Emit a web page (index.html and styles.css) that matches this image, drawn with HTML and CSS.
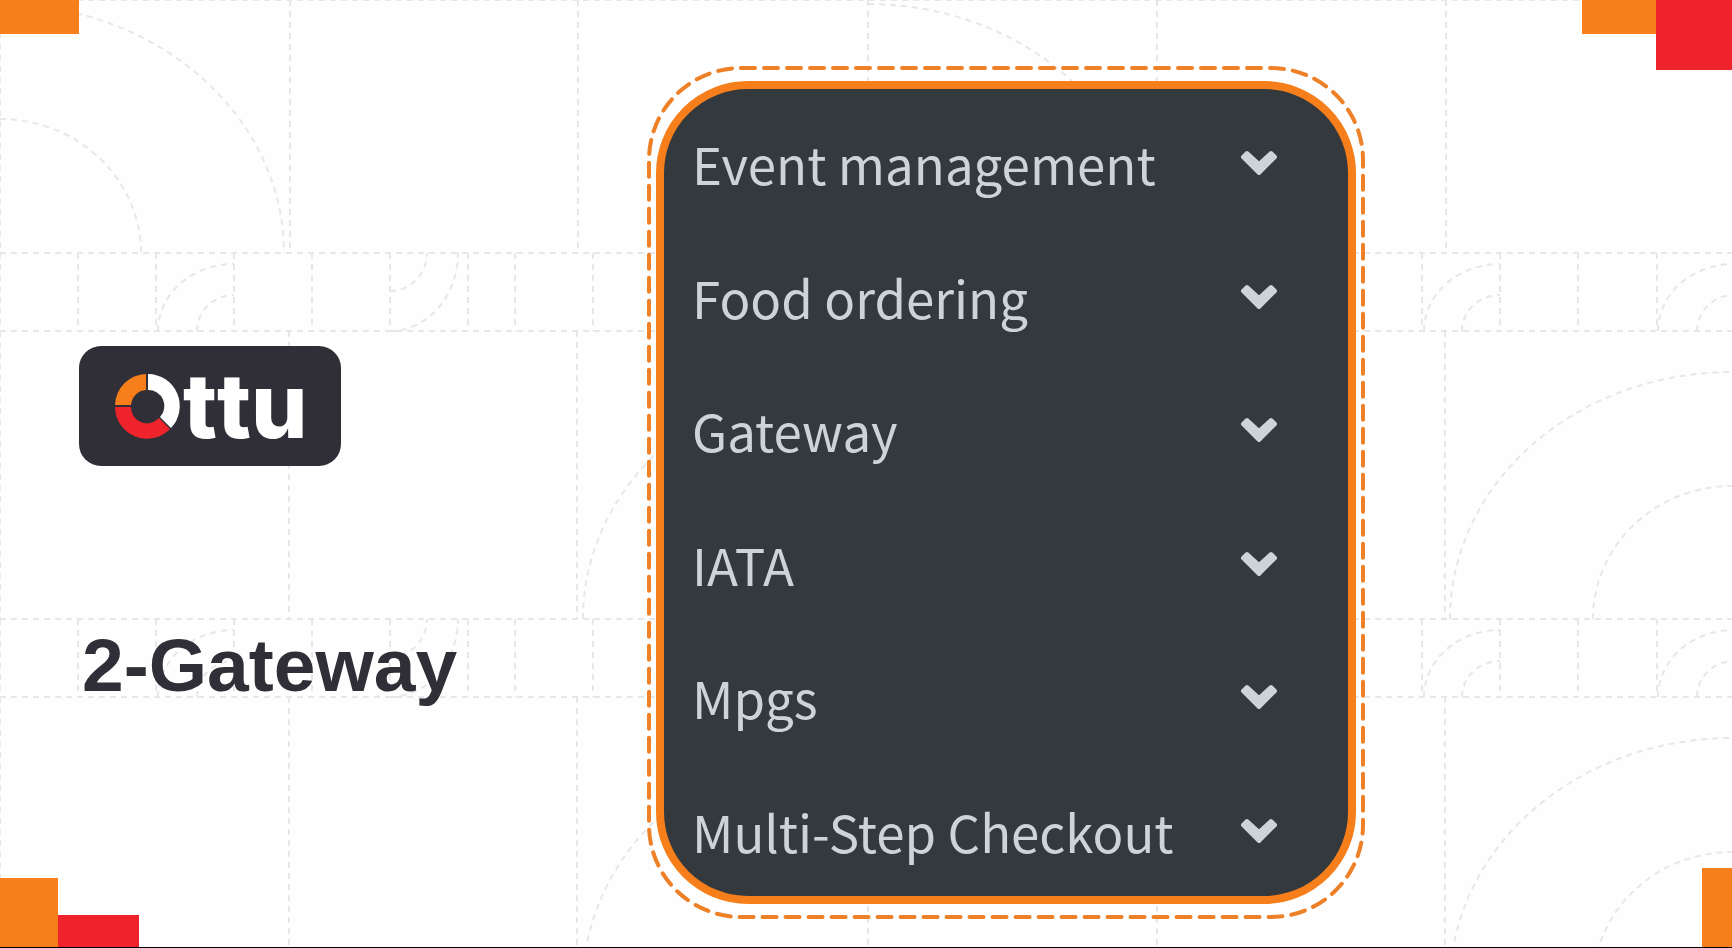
FILE: index.html
```html
<!DOCTYPE html>
<html lang="en">
<head>
<meta charset="utf-8">
<title>Ottu – Gateway</title>
<link rel="stylesheet" href="styles.css">
</head>
<body>
<div class="page">
  <svg class="backdrop" viewBox="0 0 1732 947" preserveAspectRatio="none" aria-hidden="true">
    <defs>
      <g id="strip">
        <path d="M0 0H1732M0 78H1732"/>
        <path d="M0 0V78M78 0V78M156 0V78M234 0V78M312 0V78M390 0V78M468 0V78M515 0V78M593 0V78M1422 0V78M1500 0V78M1578 0V78M1657 0V78"/>
        <path d="M158 78A76 67 0 0 1 234 11M197 78A37 36 0 0 1 234 42"/>
        <path d="M390 38A37 38 0 0 0 427 0M390 78A68 78 0 0 0 458 0"/>
        <path d="M1424 78A76 67 0 0 1 1500 11M1462 78A38 36 0 0 1 1500 42"/>
        <path d="M1658 78A76 67 0 0 1 1734 11M1697 78A37 36 0 0 1 1734 42"/>
      </g>
      <g id="fans">
        <path d="M583 247A284 247 0 0 1 867 0"/>
        <path d="M1450 247A282 247 0 0 1 1732 0M1593 247A139 133 0 0 1 1732 114"/>
      </g>
    </defs>
    <g class="guides">
      <path d="M0 0H1732M0 0V253M290 0V253M578 0V253M868 0V253M1157 0V253M1446 0V253"/>
      <path d="M0 331V619M289 331V619M577 331V619M1445 331V619"/>
      <path d="M0 697V947M289 697V947M577 697V947M868 697V947M1157 697V947M1445 697V947"/>
      <path d="M0 4A284 249 0 0 1 284 253M0 119A141 134 0 0 1 141 253"/>
      <path d="M868 4A282 249 0 0 1 1150 253"/>
      <use href="#strip" y="253"/>
      <use href="#strip" y="619"/>
      <use href="#fans" y="372"/>
      <use href="#fans" y="738"/>
    </g>
    <path class="block-orange" d="M0 0H79V34H0ZM1582 0H1656V34H1582ZM0 878H58V948H0ZM1702 868H1732V948H1702Z"/>
    <path class="block-red" d="M1656 0H1732V70H1656ZM58 915H139V948H58Z"/>
  </svg>

  <main class="slide">
    <section class="intro">
      <svg class="logo" viewBox="0 0 262 120" role="img" aria-label="Ottu">
        <rect class="logo-plate" width="262" height="120" rx="22"/>
        <path class="block-orange" d="M67 28V44A16 16 0 0 0 52 59H36A32 32 0 0 1 67 28Z"/>
        <path class="block-red" d="M36 61H52A16 16 0 0 0 80 72L91 83A32 32 0 0 1 36 61Z"/>
        <path class="logo-white" d="M69 28A32 32 0 0 1 92 82L81 71A16 16 0 0 0 69 44Z"/>
        <text class="logo-white logo-text" x="104" y="92">ttu</text>
      </svg>
      <h1 class="title">2-Gateway</h1>
    </section>

    <nav class="card" aria-label="Plugins">
      <svg class="card-dashes" aria-hidden="true"><rect width="100%" height="100%" rx="92"/></svg>
      <button class="item" type="button">Event management<svg class="chevron" viewBox="0 0 36 24" aria-hidden="true"><path d="M2 6L6 2L18 13L30 2L34 6L18 22Z"/></svg></button>
      <button class="item" type="button">Food ordering<svg class="chevron" viewBox="0 0 36 24" aria-hidden="true"><path d="M2 6L6 2L18 13L30 2L34 6L18 22Z"/></svg></button>
      <button class="item" type="button">Gateway<svg class="chevron" viewBox="0 0 36 24" aria-hidden="true"><path d="M2 6L6 2L18 13L30 2L34 6L18 22Z"/></svg></button>
      <button class="item" type="button">IATA<svg class="chevron" viewBox="0 0 36 24" aria-hidden="true"><path d="M2 6L6 2L18 13L30 2L34 6L18 22Z"/></svg></button>
      <button class="item" type="button">Mpgs<svg class="chevron" viewBox="0 0 36 24" aria-hidden="true"><path d="M2 6L6 2L18 13L30 2L34 6L18 22Z"/></svg></button>
      <button class="item" type="button">Multi-Step Checkout<svg class="chevron" viewBox="0 0 36 24" aria-hidden="true"><path d="M2 6L6 2L18 13L30 2L34 6L18 22Z"/></svg></button>
    </nav>
  </main>
</div>
</body>
</html>
```
FILE: styles.css
```css
* { box-sizing: border-box; }

body {
  margin: 0;
  background: #fefefe;
}

.page {
  position: relative;
  display: flex;
  min-height: 100vh;
  border-bottom: 1px solid #000;
}

.backdrop {
  position: absolute;
  inset: 0;
  width: 100%;
  height: 100%;
}

.guides {
  fill: none;
  stroke: #e8e7e8;
  stroke-width: 2;
  stroke-dasharray: 6 5;
}

.block-orange { fill: #f77f1b; }
.block-red { fill: #ef232b; }

.slide {
  position: relative;
  flex: 1;
  display: grid;
  grid-template-columns: 656fr 700fr 376fr;
  padding: 81px 0 43px;
}

.intro {
  display: flex;
  flex-direction: column;
  align-items: flex-start;
  gap: 157px;
  padding: 265px 0 0 79px;
}

.logo {
  width: 262px;
  height: 120px;
}

.logo-plate { fill: #302f38; }
.logo-white { fill: #fff; }

.logo-text {
  font-family: Inter, "Liberation Sans", sans-serif;
  font-size: 89px;
  font-weight: 800;
  font-kerning: none;
}

.title {
  margin: 0 0 0 3px;
  font: bold 75px/84px "Liberation Sans", Arial, sans-serif;
  color: #302f38;
  white-space: nowrap;
}

.card {
  position: relative;
  display: grid;
  grid-auto-rows: 1fr;
  padding: 0 0 6px;
  border: 8px solid #f77f1b;
  border-radius: 92px;
  background: #34393e;
}

.card-dashes {
  position: absolute;
  left: -15px;
  top: -21px;
  width: calc(100% + 30px);
  height: calc(100% + 42px);
  overflow: visible;
  pointer-events: none;
}

.card-dashes rect {
  fill: none;
  stroke: #ee8128;
  stroke-width: 4;
  stroke-linecap: round;
  stroke-dasharray: 14 9;
}

.item {
  display: flex;
  align-items: center;
  justify-content: space-between;
  padding: 15px 71px 0 28px;
  border: 0;
  background: none;
  color: #ced3d9;
  font-family: "Noto Sans CJK SC", sans-serif;
  font-size: 51px;
  line-height: 76px;
  text-align: left;
  white-space: nowrap;
  cursor: pointer;
}

.chevron {
  flex: none;
  width: 36px;
  height: 24px;
  overflow: visible;
}

.chevron path {
  fill: #ced3d9;
  stroke: #ced3d9;
  stroke-width: 4;
  stroke-linejoin: round;
}
```
